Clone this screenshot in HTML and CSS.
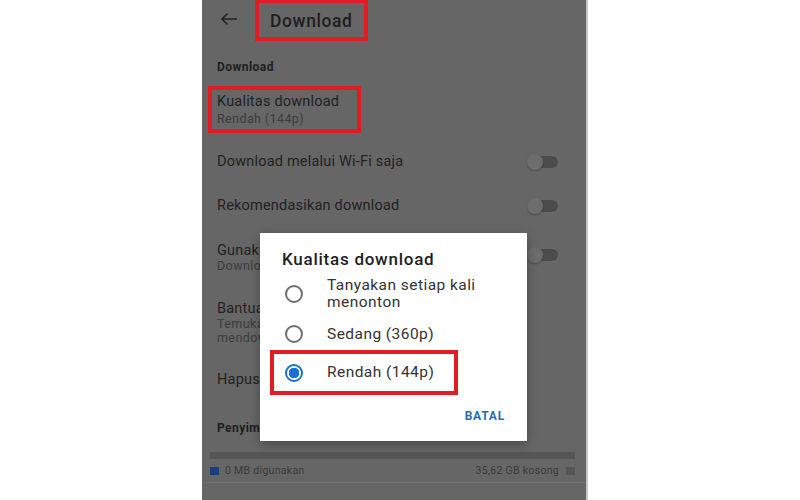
FILE: index.html
```html
<!DOCTYPE html>
<html lang="id">
<head>
    <meta charset="UTF-8">
    <meta name="viewport" content="width=device-width, initial-scale=1.0">
    <title>Download</title>
    <link rel="stylesheet" href="styles.css">
</head>
<body>
    <div class="phone">
        <header class="topbar">
            <span class="back">
                <svg width="18" height="14" viewBox="0 0 18 14">
                    <path d="M17 7H2M7.5 1.5L2 7l5.5 5.5" fill="none" stroke="#222" stroke-width="1.6"/>
                </svg>
            </span>
            <h1 class="title">Download</h1>
        </header>

        <div class="list">
            <div class="section-label">Download</div>

            <div class="item item-marked">
                <div class="item-title">Kualitas download</div>
                <div class="item-sub">Rendah (144p)</div>
            </div>

            <div class="row row-44">
                <div class="item-title">Download melalui Wi-Fi saja</div>
                <span class="toggle"></span>
            </div>

            <div class="row row-44">
                <div class="item-title">Rekomendasikan download</div>
                <span class="toggle"></span>
            </div>

            <div class="row row-60">
                <div class="row-text">
                    <div class="item-title">Gunakan kartu SD</div>
                    <div class="item-sub">Download video ke kartu SD</div>
                </div>
                <span class="toggle"></span>
            </div>

            <div class="row row-70">
                <div class="row-text">
                    <div class="item-title">Bantuan download</div>
                    <div class="item-sub">Temukan video yang disarankan untuk Anda,<br>mendownload otomatis saat terhubung</div>
                </div>
            </div>

            <div class="row row-44">
                <div class="item-title">Hapus semua download</div>
            </div>

            <div class="row row-52">
                <div class="section-label">Penyimpanan</div>
            </div>
        </div>

        <div class="storage">
            <div class="storage-bar"></div>
            <div class="legend">
                <span class="legend-item"><i class="swatch swatch-used"></i>0 MB digunakan</span>
                <span class="legend-item">35,62 GB kosong<i class="swatch swatch-free"></i></span>
            </div>
        </div>

        <!-- dialog over the dimmed settings -->
        <div class="dialog">
            <div class="dialog-title">Kualitas download</div>
            <div class="option option-two">
                <span class="radio"></span>
                <span class="option-text">Tanyakan setiap kali<br>menonton</span>
            </div>
            <div class="option option-one">
                <span class="radio"></span>
                <span class="option-text">Sedang (360p)</span>
            </div>
            <div class="option option-marked">
                <span class="radio radio-on"></span>
                <span class="option-text">Rendah (144p)</span>
            </div>
            <div class="dialog-actions">
                <span class="btn-text">BATAL</span>
            </div>
        </div>
    </div>
</body>
</html>
```

FILE: styles.css
```css
/* Page */
body {
    margin: 0;
    background: #fff;
    font-family: Roboto, "Liberation Sans", sans-serif;
    color: #222;
}

/* Phone screen, already dimmed by the dialog */
.phone {
    position: relative;
    width: 384px;
    height: 500px;
    margin-left: 202px;
    background: #666;
    border-right: 2px solid #c8c8c8;
    overflow: hidden;
}

/* Top bar */
.topbar {
    display: flex;
    height: 41px;
}

.back {
    display: flex;
    align-items: center;
    width: 53px;
    padding-left: 18px;
    padding-bottom: 4px;
    box-sizing: border-box;
}

.title {
    display: flex;
    align-items: center;
    width: 113px;
    margin: 0;
    padding: 1px 0 0 11px;
    box-sizing: border-box;
    border: 4px solid #e31b23;
    border-top-width: 3px;
    font-size: 17.5px;
    font-weight: 500;
    letter-spacing: 0.6px;
    color: #1e1e1e;
}

/* Settings list */
.list {
    padding: 0 28px 0 15px;
}

.section-label {
    margin-top: 19px;
    font-size: 12px;
    line-height: 14px;
    font-weight: 700;
    letter-spacing: 0.45px;
    color: #1e1e1e;
}

.item-title {
    font-size: 14.5px;
    line-height: 16px;
    letter-spacing: 0.2px;
    color: #222;
}

.item-sub {
    font-size: 12.5px;
    line-height: 14px;
    letter-spacing: 0.4px;
    color: #3c3c3c;
}

.item-marked {
    width: 153px;
    height: 47px;
    margin: 12px 0 0 -9px;
    padding: 4px 0 0 5px;
    box-sizing: border-box;
    border: 4px solid #e31b23;
}

.item-marked .item-title {
    margin-bottom: 2px;
}

.row {
    display: flex;
    align-items: center;
    justify-content: space-between;
    padding-top: 3px;
    box-sizing: border-box;
}

.row-44 { height: 44px; }
.row-52 { height: 52px; }
.row-60 { height: 60px; }
.row-70 { height: 70px; }

.item-marked + .row {
    margin-top: 5px;
}

.row-text {
    width: 290px;
}

.row-52 .section-label {
    margin-top: 0;
}

/* Switch (off) */
.toggle {
    position: relative;
    width: 30px;
    height: 12px;
    border-radius: 6px;
    background: #4c4c4c;
}

.toggle::before {
    content: "";
    position: absolute;
    left: -1px;
    top: -2px;
    width: 16px;
    height: 16px;
    border-radius: 50%;
    background: #6d6d6d;
    box-shadow: 0 1px 2px rgba(0, 0, 0, 0.25);
}

.row-60 .toggle {
    margin-top: -6px;
}

/* Storage */
.storage {
    padding: 0 11px 0 8px;
    border-bottom: 1px solid #727272;
    height: 30px;
}

.storage-bar {
    height: 7px;
    background: #555;
}

.legend {
    display: flex;
    justify-content: space-between;
    margin-top: 7px;
    font-size: 10.5px;
    line-height: 10px;
    letter-spacing: 0.3px;
    color: #3a3a3a;
}

.legend-item {
    display: flex;
    align-items: center;
    gap: 6px;
}

.swatch {
    width: 9px;
    height: 8px;
}

.swatch-used {
    background: #1b3c80;
}

.swatch-free {
    background: #555;
    margin-left: 1px;
}

/* Dialog */
.dialog {
    position: absolute;
    left: 58px;
    top: 233px;
    width: 267px;
    height: 208px;
    padding-top: 16px;
    box-sizing: border-box;
    background: #fff;
    box-shadow: 0 3px 10px rgba(0, 0, 0, 0.3);
}

.dialog-title {
    padding-left: 22px;
    font-size: 17px;
    line-height: 20px;
    font-weight: 500;
    letter-spacing: 0.75px;
    color: #1e1e1e;
}

.option {
    display: flex;
    align-items: center;
    gap: 24px;
    padding-left: 25px;
}

.option-two {
    height: 34px;
    margin-top: 8px;
}

.option-one {
    height: 30px;
    margin-top: 8px;
}

.option-text {
    font-size: 15.5px;
    line-height: 17px;
    letter-spacing: 0.45px;
    color: #333;
}

.option-marked {
    width: 188px;
    height: 45px;
    margin: 1px 0 0 10px;
    padding-left: 11px;
    box-sizing: border-box;
    border: 4px solid #e31b23;
}

.radio {
    flex: none;
    width: 18px;
    height: 18px;
    box-sizing: border-box;
    border: 2px solid #6e6e6e;
    border-radius: 50%;
}

.radio-on {
    border-color: #1a6fd6;
    background: radial-gradient(circle, #1a6fd6 0 5px, #fff 5.5px);
}

.dialog-actions {
    display: flex;
    justify-content: flex-end;
    margin-top: 14px;
    padding-right: 22px;
}

.btn-text {
    font-size: 12px;
    line-height: 14px;
    font-weight: 700;
    letter-spacing: 0.8px;
    color: #2d6cae;
}
```
